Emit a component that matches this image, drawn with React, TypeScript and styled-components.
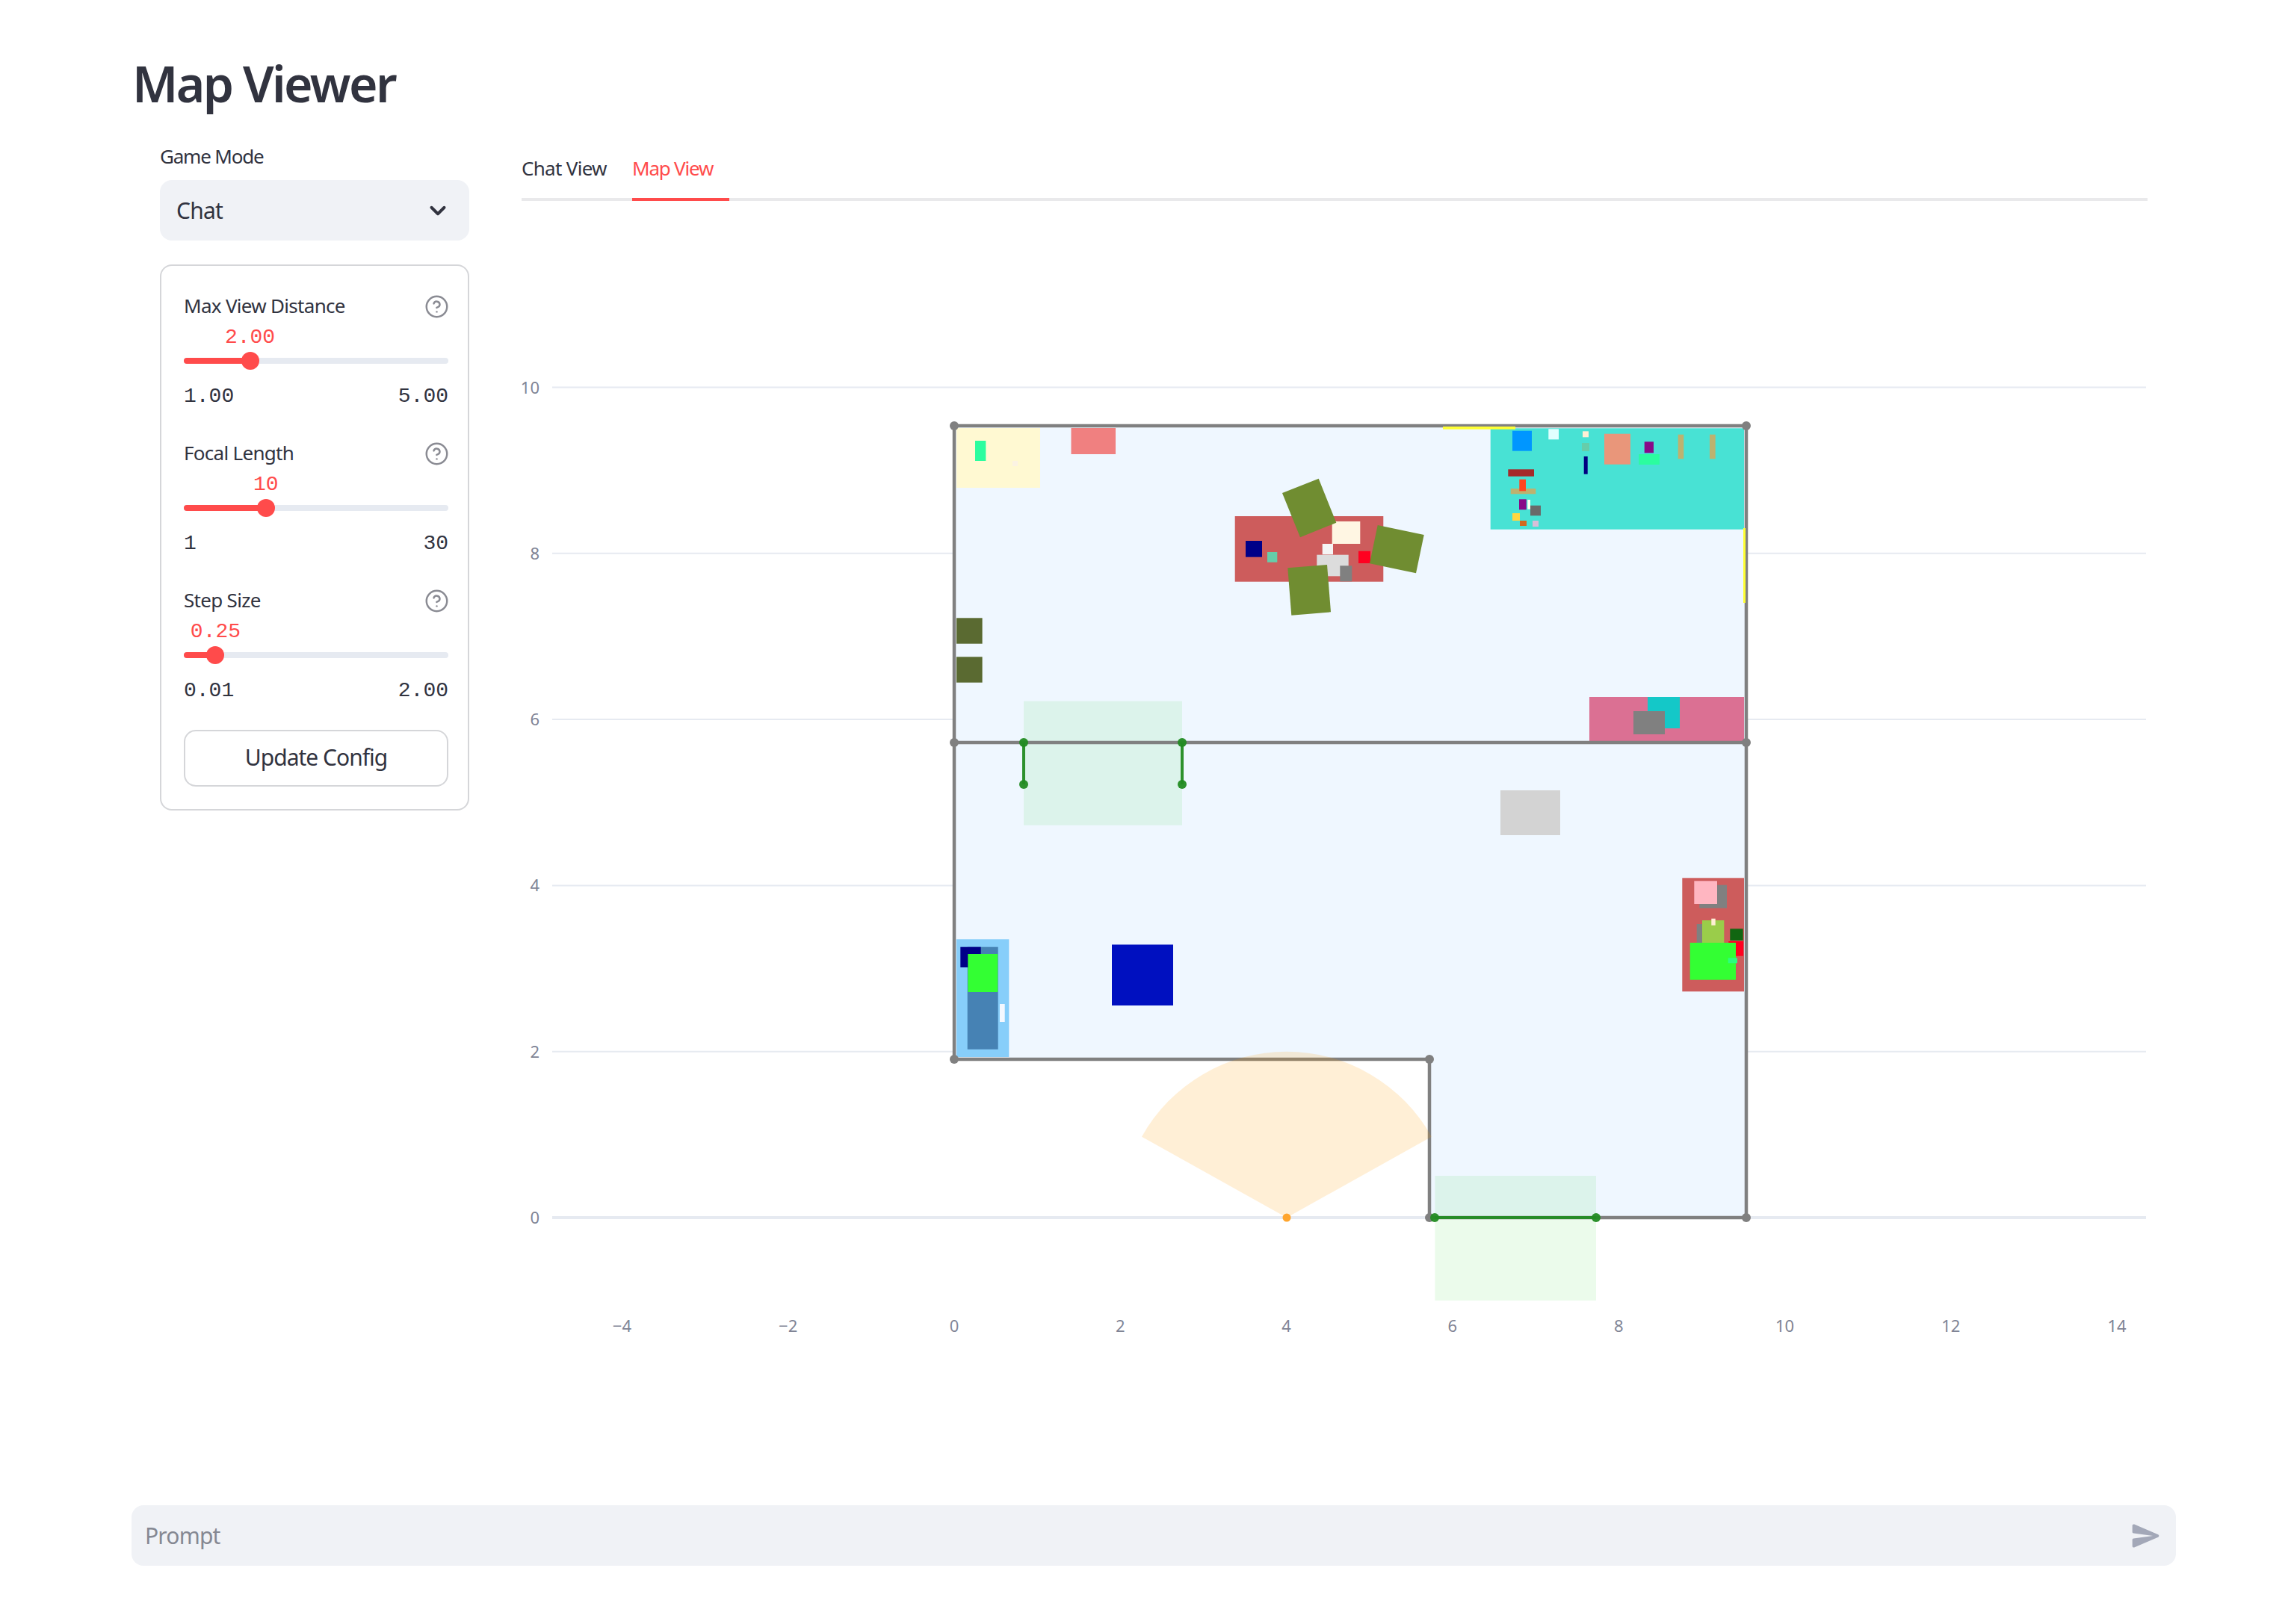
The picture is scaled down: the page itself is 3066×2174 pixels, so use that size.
import React from "react";
import styled, { createGlobalStyle } from "styled-components";
import { CircleHelp, ChevronDown } from "lucide-react";

const Global = createGlobalStyle`
  html, body { margin: 0; padding: 0; background: #fff; }
  body { font-family: "Noto Sans", sans-serif; color: #31333f; }
`;

const Page = styled.div`
  min-height: 2174px;
  display: flex;
  flex-direction: column;
  box-sizing: border-box;
  padding-top: 67px;
`;
const Title = styled.h1`
  margin: 0 0 35px 177px;
  font-size: 66px;
  line-height: 88px;
  font-weight: 600;
  letter-spacing: -2.6px;
  color: #31333f;
`;
const Columns = styled.div`
  display: grid;
  grid-template-columns: 414px 2176px;
  column-gap: 70px;
  margin-left: 214px;
`;
const Sidebar = styled.aside`
  display: flex;
  flex-direction: column;
`;
const FieldLabel = styled.label`
  font-size: 26px;
  line-height: 38px;
  letter-spacing: -1.2px;
  margin-bottom: 13px;
`;
const Select = styled.div`
  height: 81px;
  box-sizing: border-box;
  background: #f0f2f6;
  border-radius: 16px;
  display: flex;
  align-items: center;
  justify-content: space-between;
  padding: 0 25px 0 22px;
  font-size: 30px;
  letter-spacing: -0.8px;
  margin-bottom: 32px;
`;
const Panel = styled.section`
  border: 2px solid #d5d6d9;
  border-radius: 16px;
  padding: 34px 26px 30px 30px;
  display: flex;
  flex-direction: column;
`;
const SliderGroup = styled.div`
  display: flex;
  flex-direction: column;
  margin-bottom: 38px;
  &:nth-of-type(3) { margin-bottom: 34px; }
`;
const SliderHead = styled.div`
  display: flex;
  justify-content: space-between;
  align-items: center;
  height: 40px;
  font-size: 26px;
  letter-spacing: -0.7px;
  margin-bottom: 2px;
`;
const HeadText = styled.span`
  position: relative;
  top: -1px;
`;
const HelpIcon = styled(CircleHelp)`
  color: #8a8b93;
  margin-right: -1px;
`;
const ValueRow = styled.div`
  position: relative;
  height: 36px;
`;
const Value = styled.span`
  position: absolute;
  top: 2px;
  transform: translateX(-50%);
  font-family: "Liberation Mono", monospace;
  font-size: 28px;
  line-height: 36px;
  color: #ff4b4b;
`;
const TrackArea = styled.div`
  position: relative;
  height: 30px;
  display: flex;
  align-items: center;
  margin-bottom: 15px;
`;
const Track = styled.div`
  width: 100%;
  height: 8px;
  border-radius: 4px;
  background: #e6eaf1;
  overflow: hidden;
`;
const TrackFill = styled.div`
  height: 100%;
  background: #ff4b4b;
`;
const Thumb = styled.div`
  position: absolute;
  top: 3px;
  width: 24px;
  height: 24px;
  border-radius: 50%;
  margin-left: -12px;
  background: #ff4b4b;
`;
const Bounds = styled.div`
  display: flex;
  justify-content: space-between;
  font-family: "Liberation Mono", monospace;
  font-size: 28px;
  line-height: 36px;
  color: #31333f;
`;
const Button = styled.button`
  height: 76px;
  box-sizing: border-box;
  background: #fff;
  border: 2px solid #d5d6d9;
  border-radius: 16px;
  font-family: "Noto Sans", sans-serif;
  font-size: 30px;
  line-height: 38px;
  letter-spacing: -1px;
  color: #31333f;
  padding: 0 0 2px;
`;
const Main = styled.main`
  display: flex;
  flex-direction: column;
`;
const TabList = styled.div`
  display: flex;
  border-bottom: 4px solid #e9e9eb;
`;
const Tab = styled.div<{ $active?: boolean }>`
  box-sizing: border-box;
  margin-bottom: -4px;
  height: 79px;
  line-height: 70px;
  font-size: 26px;
  letter-spacing: ${(p) => (p.$active ? "-1.2px" : "-0.7px")};
  width: ${(p) => (p.$active ? "130px" : "148px")};
  color: ${(p) => (p.$active ? "#ff4b4b" : "#31333f")};
  border-bottom: 4px solid ${(p) => (p.$active ? "#ff4b4b" : "transparent")};
`;
const Chart = styled.svg`
  display: block;
  width: 2176px;
  height: 1600px;
`;
const AxisText = styled.text`
  font-family: "Noto Sans", sans-serif;
  font-size: 22px;
  fill: #808495;
`;
const ChatBar = styled.div`
  margin: auto 154px 78px 176px;
  height: 81px;
  box-sizing: border-box;
  background: #f0f2f6;
  border-radius: 16px;
  display: flex;
  align-items: center;
  justify-content: space-between;
  padding: 0 18px 0 18px;
  font-size: 30px;
  letter-spacing: -0.8px;
  color: #858892;
`;
const SendIcon = styled.svg`
  display: block;
  width: 44px;
  height: 44px;
  fill: #a3a8b8;
`;

type R = [number, number, number, number, string];

const rects: R[] = [
  [1280, 1392, 573, 653, "#fff9d2"],
  [1305, 1319.3, 590, 617, "#2cfd9f"],
  [1355, 1362, 617, 624, "#fbf3e3"],
  [1433.5, 1493, 573, 608, "#f08080"],
  [1652.7, 1851.3, 691, 778.7, "#cd5c5c"],
  [1667, 1689, 724, 745.7, "#000088"],
  [1696, 1709.3, 739, 752.7, "#66cdaa"],
  [1782.7, 1820.3, 698, 728, "#fff6e3"],
  [1769.7, 1784, 728, 742.3, "#f5f5f5"],
  [1762.3, 1804.7, 742.7, 771.3, "#dcdcdc"],
  [1793.3, 1809.3, 757.3, 778.3, "#808080"],
  [1818, 1834, 737.7, 754, "#ff0020"],
  [1280, 1314.6, 827.3, 861.7, "#5a6a31"],
  [1280, 1314.6, 879.3, 913.7, "#5a6a31"],
  [1994.7, 2334, 573.3, 708.7, "#48e2d4"],
  [2024, 2050, 576.7, 603.7, "#0096ff"],
  [2072.3, 2086, 574.3, 588.3, "#e0ffff"],
  [2118, 2126, 577.3, 585.3, "#ffefd5"],
  [2117, 2127, 593, 604, "#66cdaa"],
  [2119.7, 2124.7, 611, 634.7, "#000080"],
  [2147, 2182, 580.7, 621.7, "#e9967a"],
  [2200.7, 2213, 591.3, 606.3, "#880a88"],
  [2193.3, 2221, 608, 622, "#2bfd9f"],
  [2245.7, 2253.3, 581.7, 614.3, "#bdb26f"],
  [2288, 2295.7, 581.7, 614.3, "#bdb26f"],
  [2018.3, 2053, 628.3, 637.7, "#a52a2a"],
  [2021.7, 2055.3, 654, 661.3, "#bdb26f"],
  [2033.3, 2042, 641.7, 657.3, "#ff4520"],
  [2033, 2042.7, 668.3, 682.3, "#880a88"],
  [2044.3, 2048, 669, 681.7, "#fffff0"],
  [2048, 2062, 676.7, 690.3, "#696969"],
  [2024, 2034, 687, 697, "#ffd740"],
  [2034, 2043, 697, 704, "#d2691e"],
  [2051, 2059, 697, 705, "#d8bfd8"],
  [2127, 2334, 933, 992, "#db7093"],
  [2205, 2248, 933, 975, "#14c8c8"],
  [2186, 2228, 952, 983, "#808080"],
  [2008, 2088, 1058, 1118, "#d3d3d3"],
  [1488, 1570, 1264.5, 1346, "#0010c0"],
  [1280, 1350.3, 1257.3, 1415, "#87cefa"],
  [1294.7, 1335.7, 1267.7, 1404.7, "#4682b4"],
  [1285.3, 1312.7, 1267.7, 1295, "#000088"],
  [1295.3, 1335.3, 1277, 1328, "#33ff33"],
  [1338, 1344.7, 1344, 1368, "#f4f8ff"],
  [2251.3, 2334, 1175.3, 1327.3, "#cd5c5c"],
  [2274.3, 2311, 1184.7, 1215.7, "#808080"],
  [2267.3, 2298, 1179.3, 1210, "#ffb6c1"],
  [2270.7, 2280, 1237, 1262, "#808080"],
  [2278, 2307.3, 1232, 1262, "#9acd4a"],
  [2290.3, 2295.7, 1229.7, 1238.7, "#ffefd5"],
  [2315.3, 2332.7, 1243.3, 1259, "#116611"],
  [2313.3, 2333, 1260, 1279.7, "#ff0020"],
  [2261.7, 2323, 1262, 1311.7, "#33ff33"],
  [2312.7, 2325, 1282.3, 1289.3, "#2cfd7f"],
];

const olives = [
  "1716,660 1764.7,640.7 1788.3,699.7 1740,719.3",
  "1843.7,703 1905.7,716 1895,767.3 1833,754.3",
  "1723.3,760.3 1776,756 1781,819.3 1728.3,823.7",
];

const X0 = 1277;
const Y0 = 1630;
const U = 111.15;

const sliders = [
  { label: "Max View Distance", value: "2.00", min: "1.00", max: "5.00", pct: 25 },
  { label: "Focal Length", value: "10", min: "1", max: "30", pct: 31 },
  { label: "Step Size", value: "0.25", min: "0.01", max: "2.00", pct: 12 },
];

const xTicks = [-4, -2, 0, 2, 4, 6, 8, 10, 12, 14];
const yTicks = [0, 2, 4, 6, 8, 10];

const wallDots = [
  [1277, 570], [2337, 570], [1277, 994], [2337, 994], [2337, 1630], [1913, 1630], [1913, 1418], [1277, 1418],
];
const doorDots = [
  [1370, 994], [1370, 1050], [1582, 994], [1582, 1050], [1920, 1630], [2136, 1630],
];

export default function App() {
  return (
    <Page>
      <Global />
      <Title>Map Viewer</Title>
      <Columns>
        <Sidebar>
          <FieldLabel>Game Mode</FieldLabel>
          <Select>
            <span>Chat</span>
            <ChevronDown size={34} strokeWidth={2.8} color="#31333f" />
          </Select>
          <Panel>
            {sliders.map((s) => (
              <SliderGroup key={s.label}>
                <SliderHead>
                  <HeadText>{s.label}</HeadText>
                  <HelpIcon size={33} strokeWidth={1.8} />
                </SliderHead>
                <ValueRow>
                  <Value style={{ left: `${s.pct}%` }}>{s.value}</Value>
                </ValueRow>
                <TrackArea>
                  <Track>
                    <TrackFill style={{ width: `${s.pct}%` }} />
                  </Track>
                  <Thumb style={{ left: `${s.pct}%` }} />
                </TrackArea>
                <Bounds>
                  <span>{s.min}</span>
                  <span>{s.max}</span>
                </Bounds>
              </SliderGroup>
            ))}
            <Button>Update Config</Button>
          </Panel>
        </Sidebar>
        <Main>
          <TabList>
            <Tab>Chat View</Tab>
            <Tab $active>Map View</Tab>
          </TabList>
          <Chart viewBox="698 269 2176 1600">
            {yTicks.map((t) => (
              <g key={t}>
                <line
                  x1={739}
                  x2={2872}
                  y1={Y0 - t * U}
                  y2={Y0 - t * U}
                  stroke="#e6eaf1"
                  strokeWidth={t === 0 ? 4 : 2}
                />
                <AxisText x={722} y={Y0 - t * U + 8} textAnchor="end">
                  {t}
                </AxisText>
              </g>
            ))}
            {xTicks.map((t) => (
              <AxisText key={t} x={X0 + t * U} y={1783} textAnchor="middle">
                {t < 0 ? `\u2212${-t}` : t}
              </AxisText>
            ))}
            <polygon
              points="1277,570 2337,570 2337,1630 1913,1630 1913,1418 1277,1418"
              fill="#eff7ff"
            />
            {rects.map(([x1, x2, y1, y2, c], i) => (
              <rect key={i} x={x1} y={y1} width={x2 - x1} height={y2 - y1} fill={c} />
            ))}
            {olives.map((p) => (
              <polygon key={p} points={p} fill="#708d31" />
            ))}
            <rect x={1370} y={938.7} width={212} height={166} fill="rgba(30,210,30,.09)" />
            <rect x={1920.4} y={1574} width={215.6} height={167} fill="rgba(30,210,30,.09)" />
            <polygon
              points="1277,570 2337,570 2337,1630 1913,1630 1913,1418 1277,1418"
              fill="none"
              stroke="#808080"
              strokeWidth={4.5}
            />
            <line x1={1277} x2={2337} y1={994} y2={994} stroke="#808080" strokeWidth={4.5} />
            <rect x={1931} y={571} width={97} height={3.7} fill="#ffff33" />
            <rect x={2333} y={707} width={3} height={100} fill="#ffff33" />
            {wallDots.map(([x, y]) => (
              <circle key={`${x}-${y}`} cx={x} cy={y} r={6} fill="#808080" />
            ))}
            <g stroke="#228b22" strokeOpacity={0.95} strokeWidth={4}>
              <line x1={1370} x2={1370} y1={994} y2={1050} />
              <line x1={1582} x2={1582} y1={994} y2={1050} />
              <line x1={1920} x2={2136} y1={1630} y2={1630} />
            </g>
            {doorDots.map(([x, y]) => (
              <circle key={`${x}-${y}`} cx={x} cy={y} r={6} fill="#228b22" fillOpacity={0.95} />
            ))}
            <path
              d="M1722 1630 L1528 1521.7 A222 222 0 0 1 1915.8 1521.7 Z"
              fill="#ff9a00"
              fillOpacity={0.16}
            />
            <circle cx={1722} cy={1630} r={5.5} fill="#ffa52d" />
          </Chart>
        </Main>
      </Columns>
      <ChatBar>
        <span>Prompt</span>
        <SendIcon viewBox="0 0 24 24">
          <path d="M3.4 20.4l17.45-7.48c.81-.35.81-1.49 0-1.84L3.4 3.6c-.66-.29-1.39.2-1.39.91L2 9.12c0 .5.37.93.87.99L17 12 2.87 13.88c-.5.07-.87.5-.87 1l.01 4.61c0 .71.73 1.2 1.39.91z" />
        </SendIcon>
      </ChatBar>
    </Page>
  );
}
